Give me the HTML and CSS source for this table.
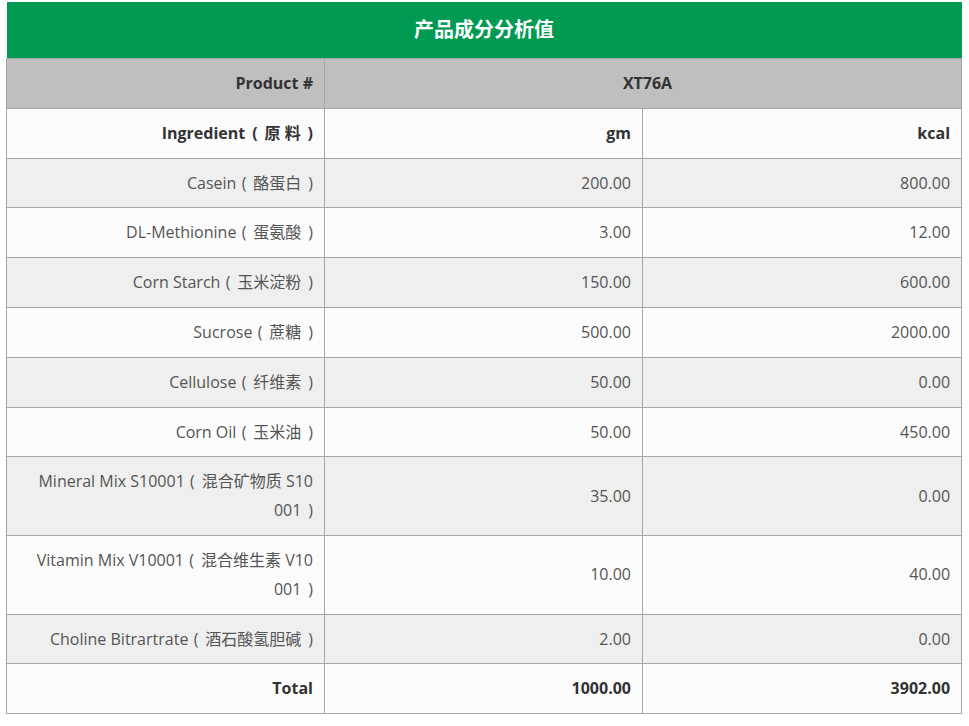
FILE: index.html
```html
<!DOCTYPE html>
<html>
<head>
<meta charset="utf-8">
<link rel="stylesheet" href="styles.css">
</head>
<body>
<table class="spec">
  <colgroup><col class="c1"><col class="c2"><col class="c3"></colgroup>
  <thead>
    <tr><th colspan="3" class="title">产品成分分析值</th></tr>
    <tr class="prod"><th>Product #</th><th colspan="2" class="center">XT76A</th></tr>
  </thead>
  <tbody>
    <tr class="head"><td>Ingredient&#8196;&#8202;(&#8196;&#8202;原 料&#8196;&#8202;)</td><td>gm</td><td>kcal</td></tr>
    <tr class="alt"><td>Casein&#8196;(&#8196;&#8202;酪蛋白&#8196;&#8202;)</td><td>200.00</td><td>800.00</td></tr>
    <tr><td>DL-Methionine&#8196;(&#8196;&#8202;蛋氨酸&#8196;&#8202;)</td><td>3.00</td><td>12.00</td></tr>
    <tr class="alt"><td>Corn Starch&#8196;(&#8196;&#8202;玉米淀粉&#8196;&#8202;)</td><td>150.00</td><td>600.00</td></tr>
    <tr><td>Sucrose&#8196;(&#8196;&#8202;蔗糖&#8196;&#8202;)</td><td>500.00</td><td>2000.00</td></tr>
    <tr class="alt"><td>Cellulose&#8196;(&#8196;&#8202;纤维素&#8196;&#8202;)</td><td>50.00</td><td>0.00</td></tr>
    <tr><td>Corn Oil&#8196;(&#8196;&#8202;玉米油&#8196;&#8202;)</td><td>50.00</td><td>450.00</td></tr>
    <tr class="alt"><td>Mineral Mix S10001&#8196;(&#8196;&#8202;混合矿物质 S10001&#8196;&#8202;)</td><td>35.00</td><td>0.00</td></tr>
    <tr><td>Vitamin Mix V10001&#8196;(&#8196;&#8202;混合维生素 V10001&#8196;&#8202;)</td><td>10.00</td><td>40.00</td></tr>
    <tr class="alt"><td>Choline Bitrartrate&#8196;(&#8196;&#8202;酒石酸氢胆碱&#8196;&#8202;)</td><td>2.00</td><td>0.00</td></tr>
    <tr class="head"><td>Total</td><td>1000.00</td><td>3902.00</td></tr>
  </tbody>
</table>
</body>
</html>
```

FILE: styles.css
```css
html, body {
  margin: 0;
  padding: 0;
  background: #ffffff;
}
body {
  padding: 2px 8px 0 6px;
  font-family: "Open Sans", "Noto Sans CJK SC", sans-serif;
  font-size: 16px;
  color: #555555;
}
.spec {
  width: 955px;
  border-collapse: collapse;
  table-layout: fixed;
}
.c1 { width: 318px; }
.c2 { width: 318px; }
.c3 { width: 319px; }
.spec th, .spec td {
  border: 1px solid #a6a6a6;
  padding: 10px 11px 10px 10px;
  line-height: 28.8px;
  text-align: right;
  word-break: break-all;
  background: #fcfcfc;
}
.spec tbody td:first-child {
  padding-left: 27px;
}
.spec th.title {
  background: #009a52;
  color: #ffffff;
  font-size: 20px;
  font-weight: 700;
  text-align: center;
  border: none;
  height: 56px;
  padding: 0;
  line-height: 56px;
}
.prod th {
  background: #bfbfbf;
  color: #333333;
  font-weight: 700;
}
.prod th.center {
  text-align: center;
  padding-left: 20px;
}
.head td {
  font-weight: 700;
  color: #333333;
}
.alt td {
  background: #efefef;
}
```
